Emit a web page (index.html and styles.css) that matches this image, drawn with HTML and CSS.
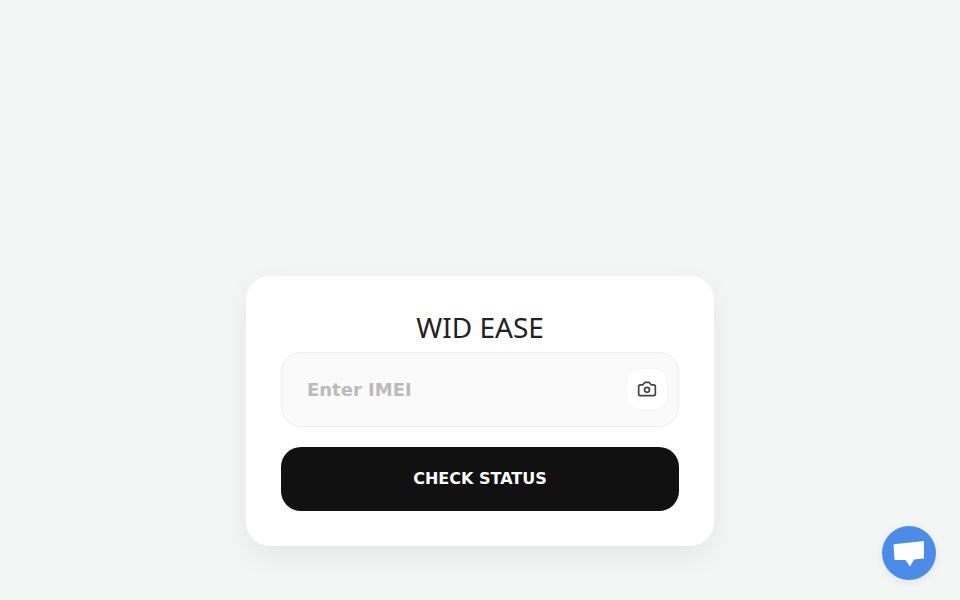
FILE: index.html
```html
<!DOCTYPE html>
<html lang="en">
<head>
<meta charset="utf-8">
<title>WID EASE</title>
<link rel="stylesheet" href="styles.css">
</head>
<body>
<main class="card">
  <h1 class="title">WID EASE</h1>
  <div class="field">
    <input class="imei" type="text" placeholder="Enter IMEI">
    <button class="scan" type="button" aria-label="Scan">
      <svg width="20" height="20" viewBox="0 0 24 24" fill="none" stroke="#444" stroke-width="2" stroke-linecap="round" stroke-linejoin="round"><path d="M14.5 4h-5L7 7H4a2 2 0 0 0-2 2v9a2 2 0 0 0 2 2h16a2 2 0 0 0 2-2V9a2 2 0 0 0-2-2h-3z"/><circle cx="12" cy="13" r="3"/></svg>
    </button>
  </div>
  <button class="submit" type="button">CHECK STATUS</button>
</main>
<button class="chat" type="button" aria-label="Chat">
  <svg width="32" height="32" viewBox="0 0 32 32"><path fill="#fff" d="M0.500 7.300 31 4 31 21.500 21 22.500 17 29.500 12.500 23 1.500 23Z"/></svg>
</button>
</body>
</html>
```
FILE: styles.css
```css
* { box-sizing: border-box; }
html, body { height: 100%; }
body {
  margin: 0;
  padding-top: 276px;
  background: #f4f6f6;
  display: flex;
  flex-direction: column;
  align-items: center;
  overflow: hidden;
  font-family: "DejaVu Sans", sans-serif;
}
.card {
  width: 468px;
  height: 270px;
  padding: 35px;
  background: #fff;
  border-radius: 24px;
  box-shadow: 0 10px 30px rgba(0, 0, 0, 0.06);
  display: flex;
  flex-direction: column;
}
.title {
  margin: 0 0 9px;
  font-family: "Noto Sans", sans-serif;
  font-size: 28px;
  font-weight: 400;
  line-height: 32px;
  text-align: center;
  color: #222;
}
.field {
  height: 75px;
  padding: 0 10px 2px 25px;
  background: #fafafa;
  border: 1px solid #eee;
  border-radius: 20px;
  display: flex;
  align-items: center;
  gap: 10px;
}
.imei {
  flex: 1;
  min-width: 0;
  border: 0;
  padding: 2px 0 0;
  outline: 0;
  background: transparent;
  font-family: "DejaVu Sans", sans-serif;
  font-size: 18px;
  font-weight: 700;
  color: #222;
}
.imei::placeholder { color: #bbb; opacity: 1; }
.scan {
  width: 42px;
  height: 42px;
  padding: 0;
  border: 1px solid #f6f6f6;
  border-radius: 14px;
  background: #fff;
  display: flex;
  align-items: center;
  justify-content: center;
}
.submit {
  height: 64px;
  margin-top: 20px;
  padding: 0 0 1px;
  border: 0;
  border-radius: 20px;
  background: #111;
  color: #fff;
  font-family: "DejaVu Sans", sans-serif;
  font-size: 16px;
  font-weight: 700;
}
.chat {
  position: fixed;
  right: 24px;
  bottom: 20px;
  width: 54px;
  height: 54px;
  padding: 0;
  border: 0;
  border-radius: 50%;
  background: #4a8ce8;
  box-shadow: 0 2px 10px rgba(0, 0, 0, 0.08);
  display: flex;
  align-items: center;
  justify-content: center;
}
```
